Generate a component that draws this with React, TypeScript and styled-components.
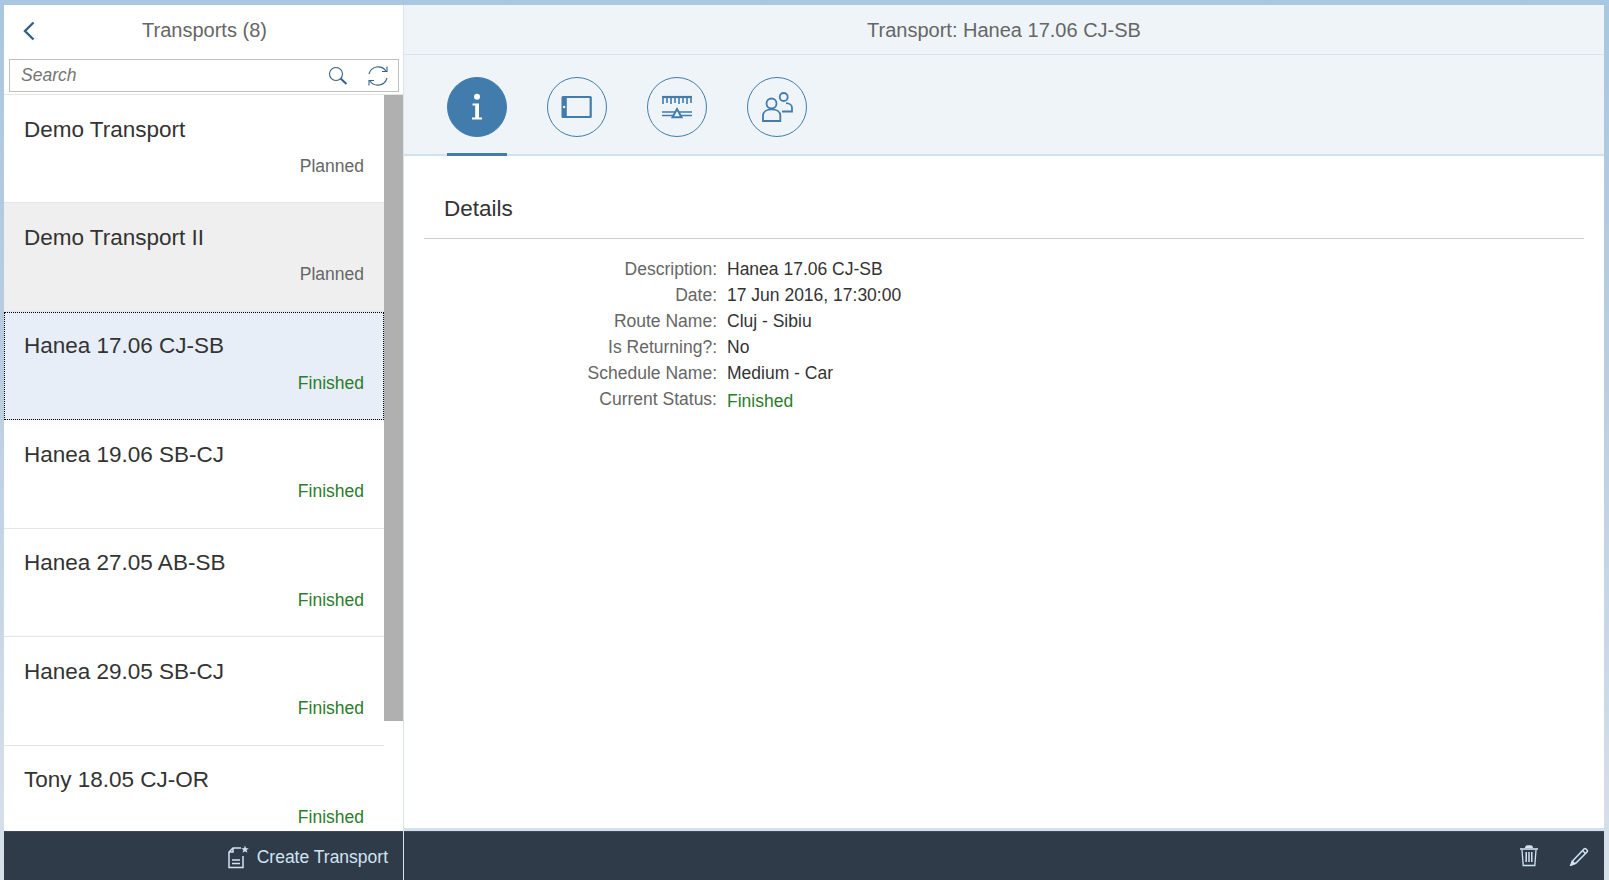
import { Fragment, ReactNode } from "react";
import styled, { createGlobalStyle } from "styled-components";

type Transport = {
	name: string;
	status: "Planned" | "Finished";
	look?: "hover" | "selected";
};

const transports: Transport[] = [
	{ name: "Demo Transport", status: "Planned" },
	{ name: "Demo Transport II", status: "Planned", look: "hover" },
	{ name: "Hanea 17.06 CJ-SB", status: "Finished", look: "selected" },
	{ name: "Hanea 19.06 SB-CJ", status: "Finished" },
	{ name: "Hanea 27.05 AB-SB", status: "Finished" },
	{ name: "Hanea 29.05 SB-CJ", status: "Finished" },
	{ name: "Tony 18.05 CJ-OR", status: "Finished" },
];

const GlobalStyle = createGlobalStyle`
	html, body {
		margin: 0;
		padding: 0;
		overflow: hidden;
	}
	body {
		font-family: "Liberation Sans", Arial, sans-serif;
	}
	* {
		box-sizing: border-box;
	}
`;

const Shell = styled.div`
	width: 1609px;
	height: 880px;
	padding: 5px 5px 0 4px;
	background: linear-gradient(180deg, #a9c7e0 0%, #b9cde0 40%, #d8e1ea 100%);
	display: grid;
	grid-template-columns: 400px 1fr;
	overflow: hidden;
`;

const Master = styled.section`
	display: flex;
	flex-direction: column;
	min-height: 0;
	background: #fff;
	border-right: 1px solid #dbe3ea;
`;

const MasterHeader = styled.header`
	height: 50px;
	flex-shrink: 0;
	display: flex;
	align-items: center;
	justify-content: center;
	position: relative;
	padding: 1px 0 0 2px;
`;

const BackButton = styled.button`
	position: absolute;
	left: 17px;
	top: 15px;
	width: 16px;
	height: 22px;
	padding: 0;
	border: 0;
	background: none;
	display: flex;
`;

const PageTitle = styled.h1`
	margin: 0;
	font-size: 20px;
	font-weight: 400;
	color: #666;
`;

const SearchBox = styled.div`
	height: 33px;
	margin: 4px 4px 2px 5px;
	flex-shrink: 0;
	display: flex;
	align-items: center;
	border: 1px solid #bfbfbf;
	padding: 0 9px 0 11px;
`;

const SearchHint = styled.span`
	flex: 1;
	font-size: 17.5px;
	font-style: italic;
	color: #757575;
`;

const SearchIcons = styled.div`
	display: flex;
	align-items: center;
	gap: 19px;
`;

const ListArea = styled.div`
	flex: 1;
	min-height: 0;
	display: flex;
	overflow: hidden;
	border-top: 1px solid #e5e5e5;
`;

const List = styled.ul`
	flex: 1;
	margin: 0;
	padding: 0;
	list-style: none;
`;

const Row = styled.li<{ $look?: Transport["look"] }>`
	height: 108.45px;
	padding: 20.5px 20px 0 20px;
	border-bottom: 1px solid #e5e5e5;
	background: ${(p) =>
		p.$look === "selected" ? "#e7eef7" : p.$look === "hover" ? "#efefef" : "#fff"};
	${(p) => (p.$look === "selected" ? "outline: 1px dotted #000; outline-offset: -1px;" : "")}
`;

const RowTitle = styled.div`
	font-size: 22.5px;
	line-height: 28px;
	color: #333;
`;

const RowStatus = styled.div<{ $done: boolean }>`
	margin-top: 12.5px;
	font-size: 17.5px;
	line-height: 20px;
	text-align: right;
	color: ${(p) => (p.$done ? "#2b7c2b" : "#666")};
`;

const ScrollTrack = styled.div`
	width: 19px;
	flex-shrink: 0;
`;

const ScrollThumb = styled.div`
	height: 626px;
	background: #b0b0b0;
`;

const Footer = styled.footer`
	height: 49px;
	flex-shrink: 0;
	display: flex;
	align-items: center;
	justify-content: flex-end;
	background: #2f3b48;
	border-top: 1px solid #3e4a57;
`;

const CreateButton = styled.button`
	display: flex;
	align-items: center;
	gap: 8px;
	margin-right: 15px;
	padding: 2px 0 0;
	border: 0;
	background: none;
	color: #d1e3f4;
	font: 400 17.5px "Liberation Sans", Arial, sans-serif;
`;

const FooterActions = styled.div`
	display: flex;
	align-items: center;
	gap: 30px;
	margin-right: 15px;
`;

const Detail = styled.main`
	display: flex;
	flex-direction: column;
	min-width: 0;
	min-height: 0;
	background: #fff;
`;

const DetailHeader = styled.header`
	height: 50px;
	flex-shrink: 0;
	display: flex;
	align-items: center;
	justify-content: center;
	padding-top: 1px;
	background: #eff4f9;
	border-bottom: 1px solid #d7e4f0;
`;

const TabBar = styled.nav`
	height: 101px;
	flex-shrink: 0;
	display: flex;
	gap: 40px;
	padding: 22px 0 0 43px;
	background: #eff4f9;
	border-bottom: 2px solid #d3e1ef;
`;

const Tab = styled.div<{ $active?: boolean }>`
	width: 60px;
	height: 77px;
	position: relative;
	${(p) =>
		p.$active
			? `&::after {
		content: "";
		position: absolute;
		left: 0;
		right: 0;
		bottom: -2px;
		height: 3px;
		background: #427cac;
	}`
			: ""}
`;

const TabCircle = styled.div<{ $active?: boolean }>`
	width: 60px;
	height: 60px;
	border-radius: 50%;
	display: flex;
	align-items: center;
	justify-content: center;
	border: 1px solid #427cac;
	background: ${(p) => (p.$active ? "#427cac" : "transparent")};
`;

const DetailBody = styled.div`
	flex: 1;
	min-height: 0;
	padding: 0 20px;
	border-bottom: 3px solid #d3e1ef;
`;

const SectionTitle = styled.h2`
	margin: 0;
	height: 83px;
	padding: 37px 0 0 20px;
	font-size: 22.5px;
	line-height: 32px;
	font-weight: 400;
	color: #333;
	border-bottom: 1px solid #ccc;
`;

const Form = styled.dl`
	margin: 17px 0 0;
	display: grid;
	grid-template-columns: 293px 1fr;
	grid-auto-rows: 26px;
	column-gap: 10px;
	font-size: 17.5px;
	line-height: 26px;
`;

const FieldLabel = styled.dt`
	text-align: right;
	color: #666;
`;

const FieldValue = styled.dd<{ $done?: boolean }>`
	margin: 0;
	color: ${(p) => (p.$done ? "#2b7c2b" : "#333")};
	${(p) => (p.$done ? "padding-top: 2px;" : "")}
`;

function Chevron() {
	return (
		<svg width="16" height="22" viewBox="0 0 16 22" fill="none">
			<path d="M12.5 2.5 L4 11 L12.5 19.5" stroke="#346187" strokeWidth="2.4" />
		</svg>
	);
}

function SearchIcon() {
	return (
		<svg width="20" height="20" viewBox="0 0 20 20" fill="none" stroke="#346187">
			<circle cx="8" cy="8" r="6.5" strokeWidth="1.1" />
			<path d="M12.6 12.6 L18.5 18" strokeWidth="2" />
		</svg>
	);
}

function RefreshIcon() {
	return (
		<svg width="22" height="22" viewBox="0 0 22 22" fill="none" stroke="#346187" strokeWidth="1.1">
			<path d="M2 9 A9.5 9.5 0 0 1 19 6" />
			<path d="M20 1.5 V6.5 H15" />
			<path d="M20 13 A9.5 9.5 0 0 1 3 16" />
			<path d="M2 20.5 V15.5 H7" />
		</svg>
	);
}

function InfoIcon() {
	return (
		<svg width="16" height="28" viewBox="0 0 16 28" fill="#fff">
			<circle cx="8" cy="3.8" r="3" />
			<path d="M3.5 10.5 H10 V24.5 H13 V26.5 H3 V24.5 H6.2 V12.5 H3.5 Z" />
		</svg>
	);
}

function TabletIcon() {
	return (
		<svg width="32" height="24" viewBox="0 0 32 24">
			<rect x="0.5" y="1" width="30.3" height="22" rx="1.5" fill="#427cac" />
			<rect x="5.8" y="3" width="22.8" height="18" fill="#eff4f9" />
			<circle cx="3.1" cy="12" r="1.2" fill="#eff4f9" />
		</svg>
	);
}

function ScaleIcon() {
	return (
		<svg width="32" height="24" viewBox="0 0 32 24" fill="none" stroke="#427cac">
			<path d="M1 2 H31" strokeWidth="2.2" />
			<path
				d="M2 2 V9 M6 2 V8 M10 2 V9 M14 2 V8 M18 2 V9 M22 2 V8 M26 2 V9 M30 2 V8"
				strokeWidth="1.6"
			/>
			<path d="M1 17 H31 M1 20.5 H31" strokeWidth="1.7" />
			<path d="M16 14 L20.5 22.3 H11.5 Z" strokeWidth="2" fill="#eff4f9" />
		</svg>
	);
}

function PeopleIcon() {
	return (
		<svg width="31" height="30" viewBox="0 0 31 30" fill="none" stroke="#427cac" strokeWidth="1.8">
			<circle cx="9.5" cy="11.5" r="5" />
			<path d="M1 29 V23.5 C1 19.5 5 17.3 9.7 17.3 C14.4 17.3 18.3 19.5 18.3 23.5 V29 Z" />
			<circle cx="21.7" cy="5" r="4" />
			<path d="M20 19.5 H30 V15.5 C30 13 27 11.3 24 11.2" />
		</svg>
	);
}

function CreateIcon() {
	return (
		<svg width="22" height="24" viewBox="0 0 22 24" fill="none" stroke="#d1e3f4" strokeWidth="1.5">
			<path d="M14 3 H6 L2 7 V22.5 H16 V11" />
			<path d="M6 3 V7 H2" />
			<path d="M5 15 H13 M5 18.5 H13" />
			<path
				d="M18 0.5 L19 3.3 L21.8 3.3 L19.6 5 L20.4 7.8 L18 6.2 L15.6 7.8 L16.4 5 L14.2 3.3 L17 3.3 Z"
				fill="#d1e3f4"
				stroke="none"
			/>
		</svg>
	);
}

function TrashIcon() {
	return (
		<svg width="20" height="22" viewBox="0 0 20 22" fill="none" stroke="#d1e3f4" strokeWidth="1.3">
			<path d="M1 4 H19" strokeWidth="1.6" />
			<path d="M6.5 3 Q7 1 8.5 1 H11.5 Q13 1 13.5 3" fill="#d1e3f4" />
			<path d="M3 5 L4.2 20.5 H15.8 L17 5" />
			<path d="M7.2 7 V17 M10 7 V17 M12.8 7 V17" strokeWidth="1.5" />
		</svg>
	);
}

function EditIcon() {
	return (
		<svg width="20" height="20" viewBox="0 0 20 20" fill="none" stroke="#d1e3f4" strokeWidth="1.5">
			<path d="M4.5 14 L15 3 Q16 2 17 3 L18 4 Q19 5 18 6 L7 17 L2 19 Z" />
			<path d="M13.5 4.5 L16.5 7.5" />
			<path d="M2 19 L3.2 15.5 L5.5 17.8 Z" fill="#d1e3f4" />
		</svg>
	);
}

const tabs: { id: string; icon: ReactNode }[] = [
	{ id: "info", icon: <InfoIcon /> },
	{ id: "tablet", icon: <TabletIcon /> },
	{ id: "scale", icon: <ScaleIcon /> },
	{ id: "people", icon: <PeopleIcon /> },
];

const fields = [
	{ label: "Description:", value: "Hanea 17.06 CJ-SB" },
	{ label: "Date:", value: "17 Jun 2016, 17:30:00" },
	{ label: "Route Name:", value: "Cluj - Sibiu" },
	{ label: "Is Returning?:", value: "No" },
	{ label: "Schedule Name:", value: "Medium - Car" },
	{ label: "Current Status:", value: "Finished", done: true },
];

function App() {
	return (
		<Shell>
			<GlobalStyle />
			<Master>
				<MasterHeader>
					<BackButton>
						<Chevron />
					</BackButton>
					<PageTitle>Transports (8)</PageTitle>
				</MasterHeader>
				<SearchBox>
					<SearchHint>Search</SearchHint>
					<SearchIcons>
						<SearchIcon />
						<RefreshIcon />
					</SearchIcons>
				</SearchBox>
				<ListArea>
					<List>
						{transports.map((item) => (
							<Row key={item.name} $look={item.look}>
								<RowTitle>{item.name}</RowTitle>
								<RowStatus $done={item.status === "Finished"}>{item.status}</RowStatus>
							</Row>
						))}
					</List>
					<ScrollTrack>
						<ScrollThumb />
					</ScrollTrack>
				</ListArea>
				<Footer>
					<CreateButton>
						<CreateIcon />
						Create Transport
					</CreateButton>
				</Footer>
			</Master>
			<Detail>
				<DetailHeader>
					<PageTitle>Transport: Hanea 17.06 CJ-SB</PageTitle>
				</DetailHeader>
				<TabBar>
					{tabs.map((tab, index) => (
						<Tab key={tab.id} $active={index === 0}>
							<TabCircle $active={index === 0}>{tab.icon}</TabCircle>
						</Tab>
					))}
				</TabBar>
				<DetailBody>
					<SectionTitle>Details</SectionTitle>
					<Form>
						{fields.map((field) => (
							<Fragment key={field.label}>
								<FieldLabel>{field.label}</FieldLabel>
								<FieldValue $done={field.done}>{field.value}</FieldValue>
							</Fragment>
						))}
					</Form>
				</DetailBody>
				<Footer>
					<FooterActions>
						<TrashIcon />
						<EditIcon />
					</FooterActions>
				</Footer>
			</Detail>
		</Shell>
	);
}

export default App;
